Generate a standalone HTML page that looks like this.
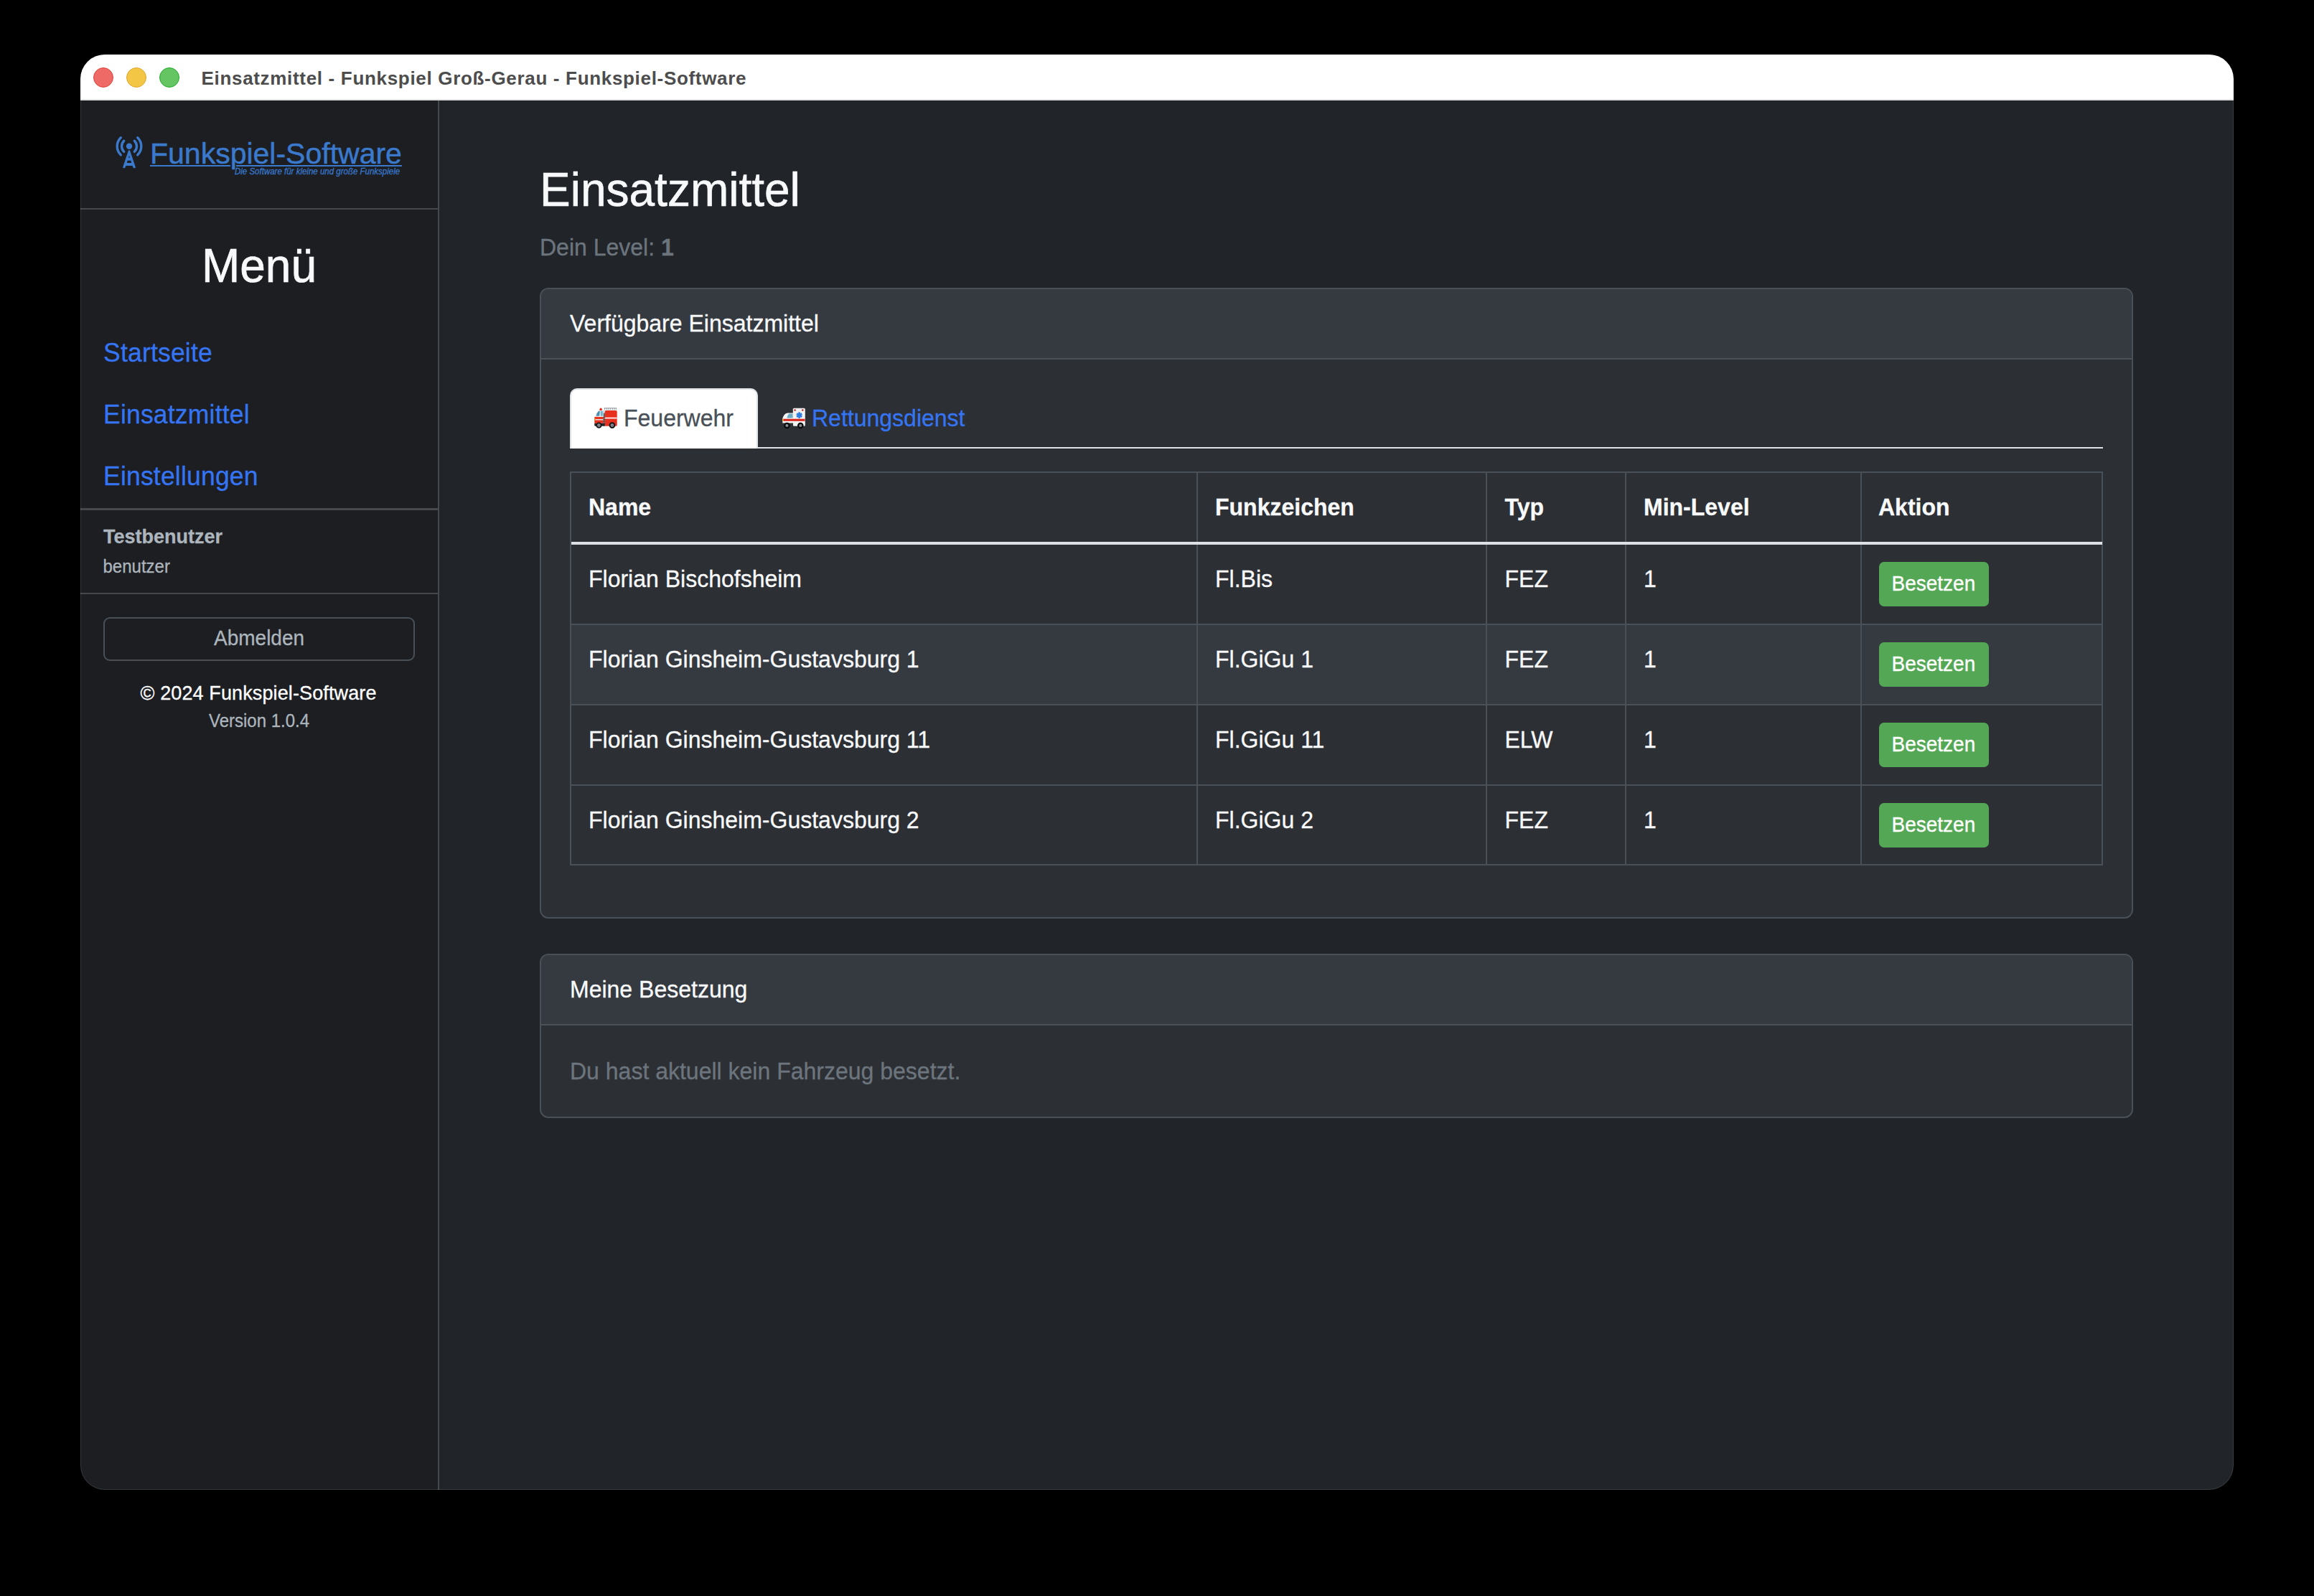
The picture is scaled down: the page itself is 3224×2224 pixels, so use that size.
<!DOCTYPE html>
<html><head><meta charset="utf-8">
<style>
html,body{margin:0;padding:0;}
body{width:3224px;height:2224px;background:#000;position:relative;overflow:hidden;font-family:"Liberation Sans",sans-serif;}
.a{position:absolute;}
.t{position:absolute;white-space:nowrap;line-height:1;transform-origin:0 0.8467em;transform:scaleY(1.05);-webkit-text-stroke-width:0.3px;}
#win{position:absolute;left:0;top:0;width:3224px;height:2224px;clip-path:inset(76px 112px 148px 112px round 34px);background:#212529;}
.th{font-size:32px;font-weight:bold;color:#f8f9fa;}
.td{font-size:32px;color:#f8f9fa;}
.btn{left:2618px;width:153px;height:62px;background:#54a754;border-radius:7px;}
.btn .t{font-size:28px;color:#fff;}
.dot{position:absolute;width:26px;height:26px;border-radius:50%;}
</style></head>
<body>
<div id="win">
  <!-- title bar -->
  <div class="a" style="left:112px;top:76px;width:3000px;height:62px;background:#fff;"></div>
  <div class="a" style="left:112px;top:138px;width:3000px;height:2px;background:#e3e3e3;"></div>
  <div class="dot" style="left:130px;top:94px;background:#ed6a66;border:1px solid #e0443e;"></div>
  <div class="dot" style="left:176px;top:94px;background:#f4c645;border:1px solid #dea52a;"></div>
  <div class="dot" style="left:222px;top:94px;background:#64c562;border:1px solid #1fae2c;"></div>
  <div class="t" id="ttl" style="left:280.5px;top:96px;font-size:26px;letter-spacing:0.68px;transform:none;-webkit-text-stroke-width:0;font-weight:bold;color:#4d4d4d;">Einsatzmittel - Funkspiel Groß-Gerau - Funkspiel-Software</div>

  <!-- sidebar -->
  <div class="a" style="left:112px;top:140px;width:498px;height:1936px;background:#1c1e22;"></div>
  <div class="a" style="left:610px;top:140px;width:2px;height:1936px;background:#45484d;"></div>
  <div class="a" style="left:112px;top:290px;width:498px;height:2px;background:#45484d;"></div>

  <div class="t" id="logo" style="left:209px;top:193.5px;font-size:40px;-webkit-text-stroke:0.5px #3a79cc;transform-origin:0 0;transform:scaleX(1.025);color:#3a79cc;text-decoration:underline;text-decoration-thickness:2px;text-underline-offset:1.5px;">Funkspiel-Software</div>
  <div class="t" id="tag" style="left:327px;top:233.5px;font-size:11.5px;-webkit-text-stroke:0.25px #3a79cc;font-style:italic;color:#3a79cc;">Die Software für kleine und große Funkspiele</div>

  <div class="t" id="menu" style="left:112px;width:498px;text-align:center;top:339px;font-size:64px;-webkit-text-stroke-width:0.7px;color:#f8f9fa;">Menü</div>
  <div class="t" id="l1" style="left:144px;top:475.3px;font-size:35.5px;letter-spacing:0.2px;color:#3575f3;">Startseite</div>
  <div class="t" id="l2" style="left:144px;top:561.3px;font-size:35.5px;letter-spacing:0.2px;color:#3575f3;">Einsatzmittel</div>
  <div class="t" id="l3" style="left:144px;top:647.3px;font-size:35.5px;letter-spacing:0.2px;color:#3575f3;">Einstellungen</div>
  <div class="a" style="left:112px;top:708px;width:498px;height:3px;background:#45484d;"></div>

  <div class="t" id="user" style="left:144px;top:735px;font-size:27px;font-weight:bold;color:#adb5bd;">Testbenutzer</div>
  <div class="t" id="role" style="left:143.5px;top:777.5px;font-size:24px;color:#adb5bd;">benutzer</div>
  <div class="a" style="left:112px;top:826px;width:498px;height:2px;background:#45484d;"></div>

  <div class="a" style="left:144px;top:860px;width:430px;height:57px;border:2px solid #495057;border-radius:9px;"></div>
  <div class="t" id="abm" style="left:298px;top:876px;font-size:28px;color:#adb5bd;">Abmelden</div>
  <div class="t" id="copy" style="left:195.5px;top:953px;font-size:27px;letter-spacing:0.12px;color:#fff;">© 2024 Funkspiel-Software</div>
  <div class="t" id="ver" style="left:291px;top:992.5px;font-size:24px;color:#adb5bd;">Version 1.0.4</div>

  <!-- main -->
  <div class="t" id="h1" style="left:752px;top:233px;-webkit-text-stroke-width:0.6px;font-size:64px;color:#f8f9fa;">Einsatzmittel</div>
  <div class="t" id="lvl" style="left:752px;top:329px;font-size:32px;color:#6c757d;">Dein Level: <b>1</b></div>

  <!-- card 1 -->
  <div class="a" style="left:752px;top:401px;width:2216px;height:875px;border:2px solid #495057;border-radius:12px;background:#2c2f34;overflow:hidden;">
    <div class="a" style="left:0;top:0;width:2216px;height:96px;background:#343a40;border-bottom:2px solid #495057;"></div>
  </div>
  <div class="t" id="ch1" style="left:794px;top:434.5px;font-size:32px;color:#f8f9fa;">Verfügbare Einsatzmittel</div>

  <!-- tabs -->
  <div class="a" style="left:794px;top:623px;width:2136px;height:2px;background:#dee2e6;"></div>
  <div class="a" style="left:794px;top:541px;width:258px;height:82px;background:#fff;border:2px solid #dee2e6;border-bottom:none;border-radius:10px 10px 0 0;"></div>
  <div class="t" id="tab1" style="left:869px;top:567px;font-size:32px;color:#495057;">Feuerwehr</div>
  <div class="t" id="tab2" style="left:1131px;top:567px;font-size:32px;color:#3575f3;">Rettungsdienst</div>

  <!-- table -->
  <div class="a" style="left:794px;top:657px;width:2132px;height:545px;border:2px solid #495057;background:#2c2f34;"></div>
  <div class="a" style="left:796px;top:871px;width:2132px;height:110px;background:#353940;"></div>
  <div class="a" style="left:796px;top:755px;width:2133px;height:4px;background:#dee2e6;"></div>
  <div class="a" style="left:796px;top:869px;width:2132px;height:2px;background:#495057;"></div>
  <div class="a" style="left:796px;top:981px;width:2132px;height:2px;background:#495057;"></div>
  <div class="a" style="left:796px;top:1093px;width:2132px;height:2px;background:#495057;"></div>
  <div class="a" style="left:1666.5px;top:659px;width:2px;height:96px;background:#495057;"></div>
  <div class="a" style="left:1666.5px;top:759px;width:2px;height:445px;background:#495057;"></div>
  <div class="a" style="left:2070px;top:659px;width:2px;height:96px;background:#495057;"></div>
  <div class="a" style="left:2070px;top:759px;width:2px;height:445px;background:#495057;"></div>
  <div class="a" style="left:2264px;top:659px;width:2px;height:96px;background:#495057;"></div>
  <div class="a" style="left:2264px;top:759px;width:2px;height:445px;background:#495057;"></div>
  <div class="a" style="left:2592px;top:659px;width:2px;height:96px;background:#495057;"></div>
  <div class="a" style="left:2592px;top:759px;width:2px;height:445px;background:#495057;"></div>

  <div class="t th" id="th1" style="left:820px;top:690.5px;">Name</div>
  <div class="t th" style="left:1693px;top:690.5px;">Funkzeichen</div>
  <div class="t th" style="left:2096.5px;top:690.5px;">Typ</div>
  <div class="t th" style="left:2290px;top:690.5px;">Min-Level</div>
  <div class="t th" style="left:2617px;top:690.5px;">Aktion</div>
  <div class="t td" id="r0" style="left:820px;top:790.7px;">Florian Bischofsheim</div>
  <div class="t td" style="left:1693px;top:790.7px;">Fl.Bis</div>
  <div class="t td" style="left:2096.5px;top:790.7px;">FEZ</div>
  <div class="t td" style="left:2290px;top:790.7px;">1</div>
  <div class="a btn" style="top:783px;"><span class="t" style="left:17.5px;top:17px;">Besetzen</span></div>
  <div class="t td" id="r1" style="left:820px;top:902.7px;">Florian Ginsheim-Gustavsburg 1</div>
  <div class="t td" style="left:1693px;top:902.7px;">Fl.GiGu 1</div>
  <div class="t td" style="left:2096.5px;top:902.7px;">FEZ</div>
  <div class="t td" style="left:2290px;top:902.7px;">1</div>
  <div class="a btn" style="top:895px;"><span class="t" style="left:17.5px;top:17px;">Besetzen</span></div>
  <div class="t td" id="r2" style="left:820px;top:1014.7px;">Florian Ginsheim-Gustavsburg 11</div>
  <div class="t td" style="left:1693px;top:1014.7px;">Fl.GiGu 11</div>
  <div class="t td" style="left:2096.5px;top:1014.7px;">ELW</div>
  <div class="t td" style="left:2290px;top:1014.7px;">1</div>
  <div class="a btn" style="top:1007px;"><span class="t" style="left:17.5px;top:17px;">Besetzen</span></div>
  <div class="t td" id="r3" style="left:820px;top:1126.7px;">Florian Ginsheim-Gustavsburg 2</div>
  <div class="t td" style="left:1693px;top:1126.7px;">Fl.GiGu 2</div>
  <div class="t td" style="left:2096.5px;top:1126.7px;">FEZ</div>
  <div class="t td" style="left:2290px;top:1126.7px;">1</div>
  <div class="a btn" style="top:1119px;"><span class="t" style="left:17.5px;top:17px;">Besetzen</span></div>

  <!-- card 2 -->
  <div class="a" style="left:752px;top:1329px;width:2216px;height:225px;border:2px solid #495057;border-radius:12px;background:#2c2f34;overflow:hidden;">
    <div class="a" style="left:0;top:0;width:2216px;height:96px;background:#343a40;border-bottom:2px solid #495057;"></div>
  </div>
  <div class="t" id="ch2" style="left:794px;top:1363px;font-size:32px;color:#f8f9fa;">Meine Besetzung</div>
  <div class="t" id="empty" style="left:794px;top:1476.5px;font-size:32px;color:#6c757d;">Du hast aktuell kein Fahrzeug besetzt.</div>

  <div class="a" style="left:112px;top:76px;width:3000px;height:2000px;box-sizing:border-box;border:1px solid rgba(255,255,255,0.12);border-radius:34px;"></div>
  <svg class="a" style="left:0;top:0;" width="3224" height="2224" viewBox="0 0 3224 2224">
    <!-- antenna logo -->
    <g fill="none" stroke="#3a79cc" stroke-width="3.4" stroke-linecap="round">
      <path d="M172.71 196.25 A10.5 10.5 0 0 0 172.71 211.35"/>
      <path d="M187.29 196.25 A10.5 10.5 0 0 1 187.29 211.35"/>
      <path d="M168.33 191.72 A16.8 16.8 0 0 0 168.33 215.88"/>
      <path d="M191.67 191.72 A16.8 16.8 0 0 1 191.67 215.88"/>
    </g>
    <circle cx="180" cy="203.8" r="4.2" fill="#3a79cc"/>
    <path fill="#3a79cc" fill-rule="evenodd" d="M178.9 210 Q180 208.4 181.1 210 L188.9 233 Q189 234.2 187.5 234.2 L186.2 234.2 Q185.6 234.2 185.4 233.3 L184.6 231.1 L175.4 231.1 L174.6 233.3 Q174.4 234.2 173.8 234.2 L172.5 234.2 Q171 234.2 171.1 233 Z M180 216.8 L181 219.8 L179 219.8 Z M177.6 223.8 L182.4 223.8 L183.2 226.9 L176.8 226.9 Z"/>

    <!-- fire truck emoji -->
    <g>
      <rect x="841.6" y="568.2" width="17.6" height="1.1" fill="#9a9da0"/>
      <g fill="#7d8184"><rect x="842.2" y="569" width="0.8" height="2.8"/><rect x="844.9" y="569" width="0.8" height="2.8"/><rect x="847.6" y="569" width="0.8" height="2.8"/><rect x="850.3" y="569" width="0.8" height="2.8"/><rect x="853" y="569" width="0.8" height="2.8"/><rect x="855.7" y="569" width="0.8" height="2.8"/><rect x="858.3" y="569" width="0.8" height="2.8"/></g>
      <rect x="842" y="570.6" width="17.2" height="1.3" fill="#e3e6e8"/>
      <path d="M835.4 572 Q835.4 568.6 837.1 568.6 Q838.8 568.6 838.8 572 Z" fill="#e8231a"/>
      <path d="M828.4 590 L828.4 581 Q829.6 574.6 833.6 572 L841 572 L841 590 Z" fill="#f7f7f7"/>
      <path d="M830.4 579.7 Q831.3 575.2 834 572.7 L835.8 572.7 L835.2 579.7 Z" fill="#4b8fb0"/>
      <rect x="836.7" y="572.7" width="3.1" height="7" rx="0.6" fill="#6fb3cc"/>
      <path d="M828.3 580.9 h12.6 v9 h-12.6 Z" fill="#e8301f"/>
      <rect x="829.6" y="584.1" width="11" height="1.4" fill="#e6f1f5"/>
      <rect x="828.5" y="583.3" width="1.5" height="2.8" rx="0.6" fill="#f0a020"/>
      <rect x="840.7" y="572" width="2.2" height="21.4" fill="#5b6064"/>
      <rect x="840.9" y="572.1" width="1.8" height="3.4" fill="#f2f2f2"/>
      <g fill="#2e3235"><rect x="840.9" y="578" width="1.8" height="0.7"/><rect x="840.9" y="581" width="1.8" height="0.7"/><rect x="840.9" y="584" width="1.8" height="0.7"/><rect x="840.9" y="587" width="1.8" height="0.7"/></g>
      <rect x="842.8" y="572.1" width="16.9" height="21.7" rx="1.5" fill="#e8301f"/>
      <rect x="842.8" y="581.7" width="16.9" height="1.7" fill="#fafafa"/>
      <path d="M828.2 590 h14.6 v3.8 h-13.2 Q828.2 593.8 828.2 592.4 Z" fill="#26292b"/>
      <circle cx="834.4" cy="592.6" r="4.2" fill="#151718"/>
      <circle cx="834.4" cy="592.6" r="2.3" fill="#8f9296"/>
      <circle cx="834.4" cy="592.6" r="0.8" fill="#55585b"/>
      <circle cx="852.9" cy="592.6" r="4.3" fill="#151718"/>
      <circle cx="852.9" cy="592.6" r="2.3" fill="#8f9296"/>
      <circle cx="852.9" cy="592.6" r="0.8" fill="#55585b"/>
    </g>

    <!-- ambulance emoji -->
    <g>
      <path d="M1090.3 589.6 L1090.3 583 Q1092 576.5 1097 575.5 L1105 575.5 L1105 591 L1092 591 Z" fill="#f4f6f7"/>
      <path d="M1096.5 582.6 Q1097.5 577 1100 576.4 L1104.7 576.4 L1104.7 582.6 Z" fill="#6aaac4"/>
      <rect x="1104.8" y="568.7" width="17" height="25" rx="1.5" fill="#f2f2f2"/>
      <circle cx="1107.6" cy="571.5" r="1.2" fill="#c81414"/>
      <circle cx="1118.3" cy="571.5" r="1.2" fill="#c81414"/>
      <g fill="#2f7de1" transform="translate(1113.6 578.6)">
        <rect x="-1.4" y="-4.2" width="2.8" height="8.4"/>
        <rect x="-1.4" y="-4.2" width="2.8" height="8.4" transform="rotate(60)"/>
        <rect x="-1.4" y="-4.2" width="2.8" height="8.4" transform="rotate(-60)"/>
      </g>
      <rect x="1091.2" y="583.7" width="30.3" height="3.1" fill="#d9261c"/>
      <rect x="1090.2" y="583.8" width="1.3" height="3" fill="#f2b01e"/>
      <rect x="1090.5" y="589.5" width="14.5" height="3" fill="#333"/>
      <circle cx="1096.4" cy="593" r="4.3" fill="#0a0a0a"/>
      <circle cx="1096.4" cy="593" r="2.1" fill="#8c8f92"/>
      <circle cx="1115.3" cy="593" r="4.3" fill="#0a0a0a"/>
      <circle cx="1115.3" cy="593" r="2.1" fill="#8c8f92"/>
    </g>
  </svg>

</div>
</body></html>
